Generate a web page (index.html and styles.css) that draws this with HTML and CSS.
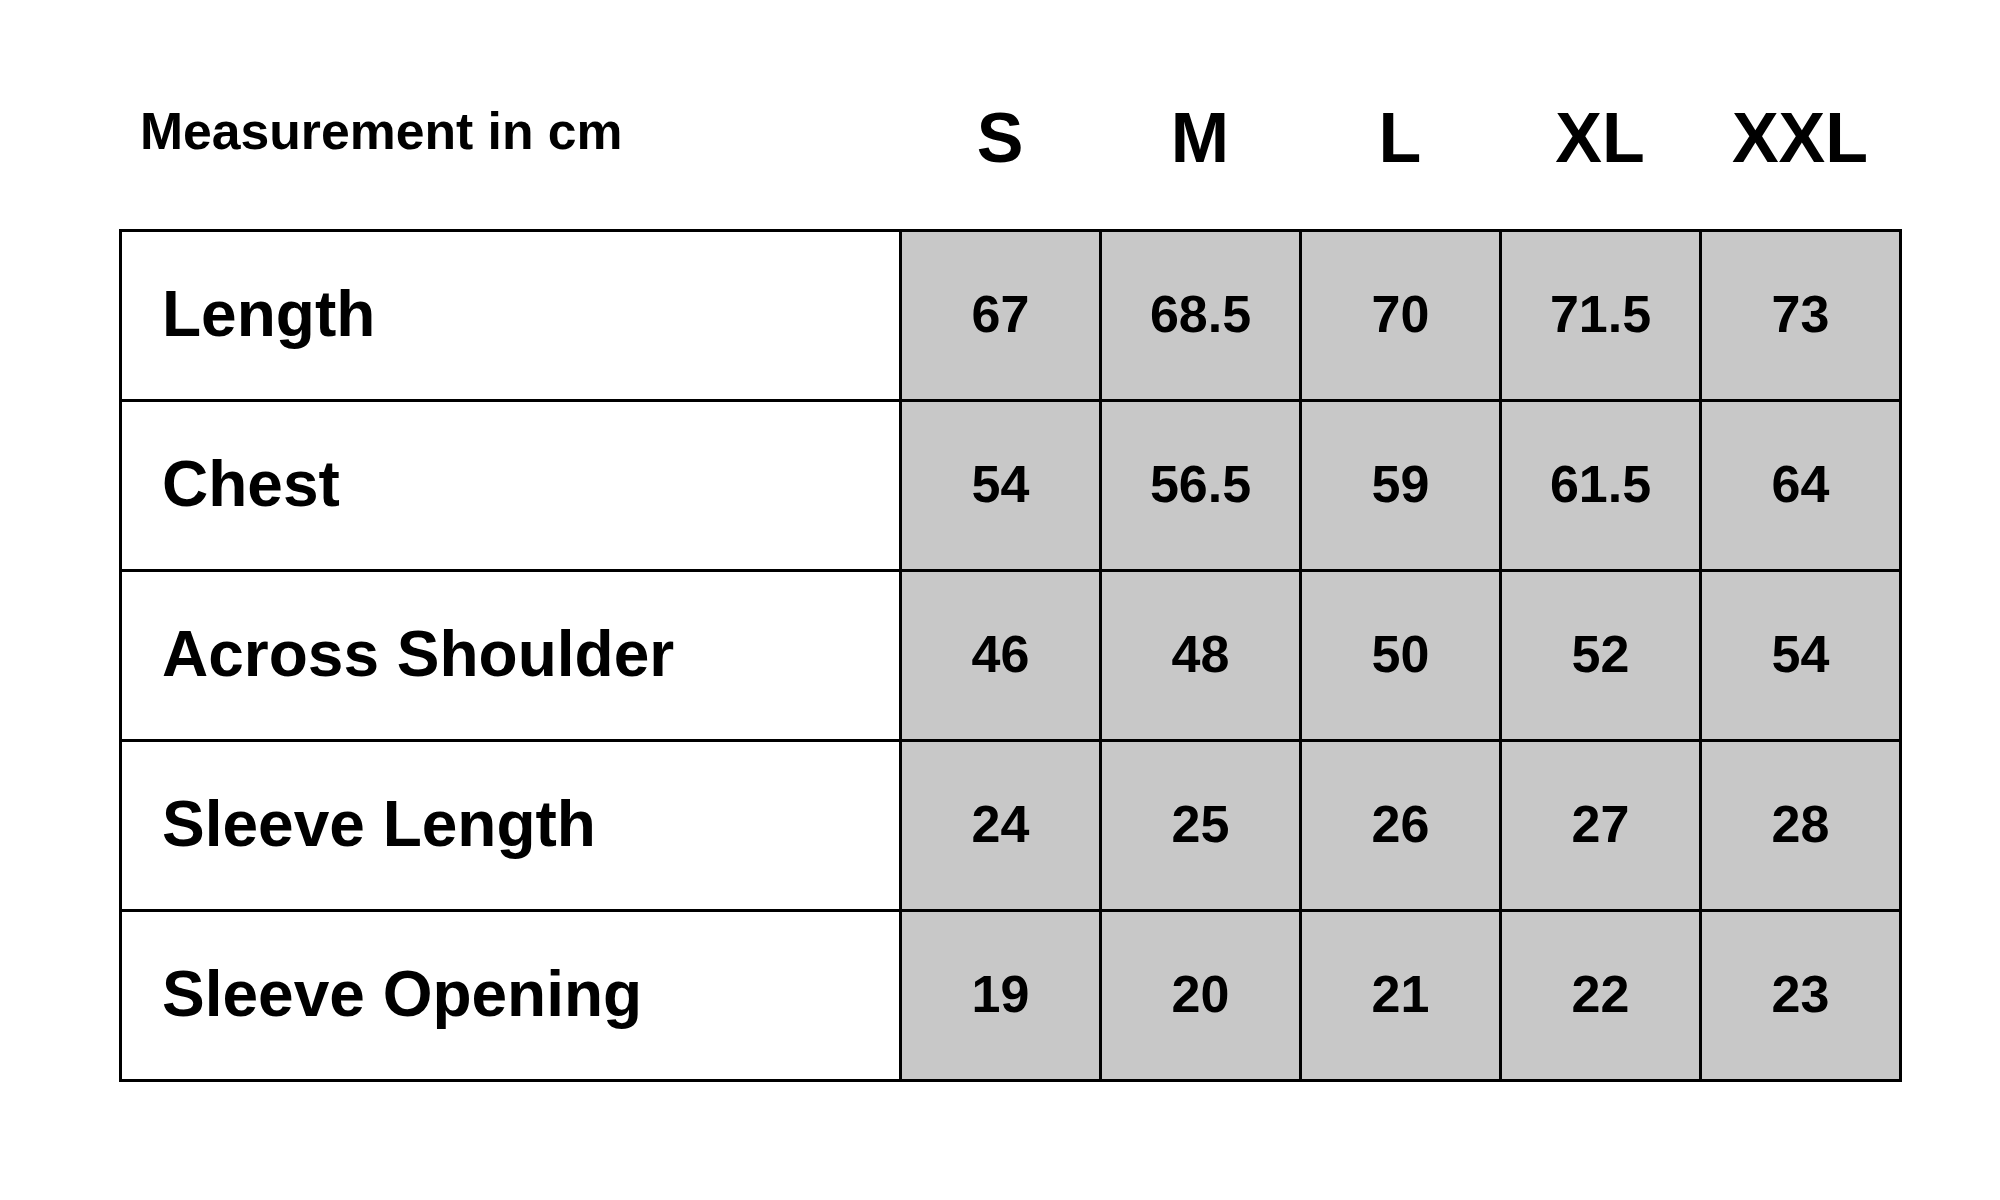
FILE: index.html
```html
<!DOCTYPE html>
<html lang="en">
<head>
<meta charset="utf-8">
<title>Size Chart</title>
<link rel="stylesheet" href="styles.css">
</head>
<body>
<div class="sheet">
  <div class="head">
    <div class="head-title">Measurement in cm</div>
    <div class="head-size">S</div>
    <div class="head-size">M</div>
    <div class="head-size">L</div>
    <div class="head-size">XL</div>
    <div class="head-size">XXL</div>
  </div>
  <div class="chart">
    <div class="label">Length</div>
    <div class="val">67</div><div class="val">68.5</div><div class="val">70</div><div class="val">71.5</div><div class="val">73</div>
    <div class="label">Chest</div>
    <div class="val">54</div><div class="val">56.5</div><div class="val">59</div><div class="val">61.5</div><div class="val">64</div>
    <div class="label">Across Shoulder</div>
    <div class="val">46</div><div class="val">48</div><div class="val">50</div><div class="val">52</div><div class="val">54</div>
    <div class="label">Sleeve Length</div>
    <div class="val">24</div><div class="val">25</div><div class="val">26</div><div class="val">27</div><div class="val">28</div>
    <div class="label">Sleeve Opening</div>
    <div class="val">19</div><div class="val">20</div><div class="val">21</div><div class="val">22</div><div class="val">23</div>
  </div>
</div>
</body>
</html>
```
FILE: styles.css
```css
html, body {
  margin: 0;
  padding: 0;
  background: #ffffff;
}
body {
  font-family: "Liberation Sans", Arial, sans-serif;
  font-weight: bold;
  color: #000000;
}
.sheet {
  padding-left: 119px;
}
.head {
  display: grid;
  grid-template-columns: 781px repeat(5, 200px);
  align-items: start;
  height: 229px;
  box-sizing: border-box;
  padding-top: 103px;
}
.head-title {
  font-size: 51.7px;
  line-height: 1;
  padding-left: 21px;
  padding-top: 3px;
}
.head-size {
  font-size: 70px;
  line-height: 1;
  text-align: center;
}
.chart {
  display: grid;
  grid-template-columns: 777px repeat(5, 197px);
  grid-auto-rows: 167px;
  gap: 3px;
  padding: 3px;
  background: #000000;
  width: max-content;
}
.label {
  background: #ffffff;
  font-size: 64px;
  line-height: 1;
  display: flex;
  align-items: center;
  padding-left: 40px;
  padding-bottom: 4px;
}
.val {
  background: #c8c8c8;
  font-size: 52px;
  line-height: 1;
  display: flex;
  align-items: center;
  justify-content: center;
  padding-bottom: 4px;
}
```
